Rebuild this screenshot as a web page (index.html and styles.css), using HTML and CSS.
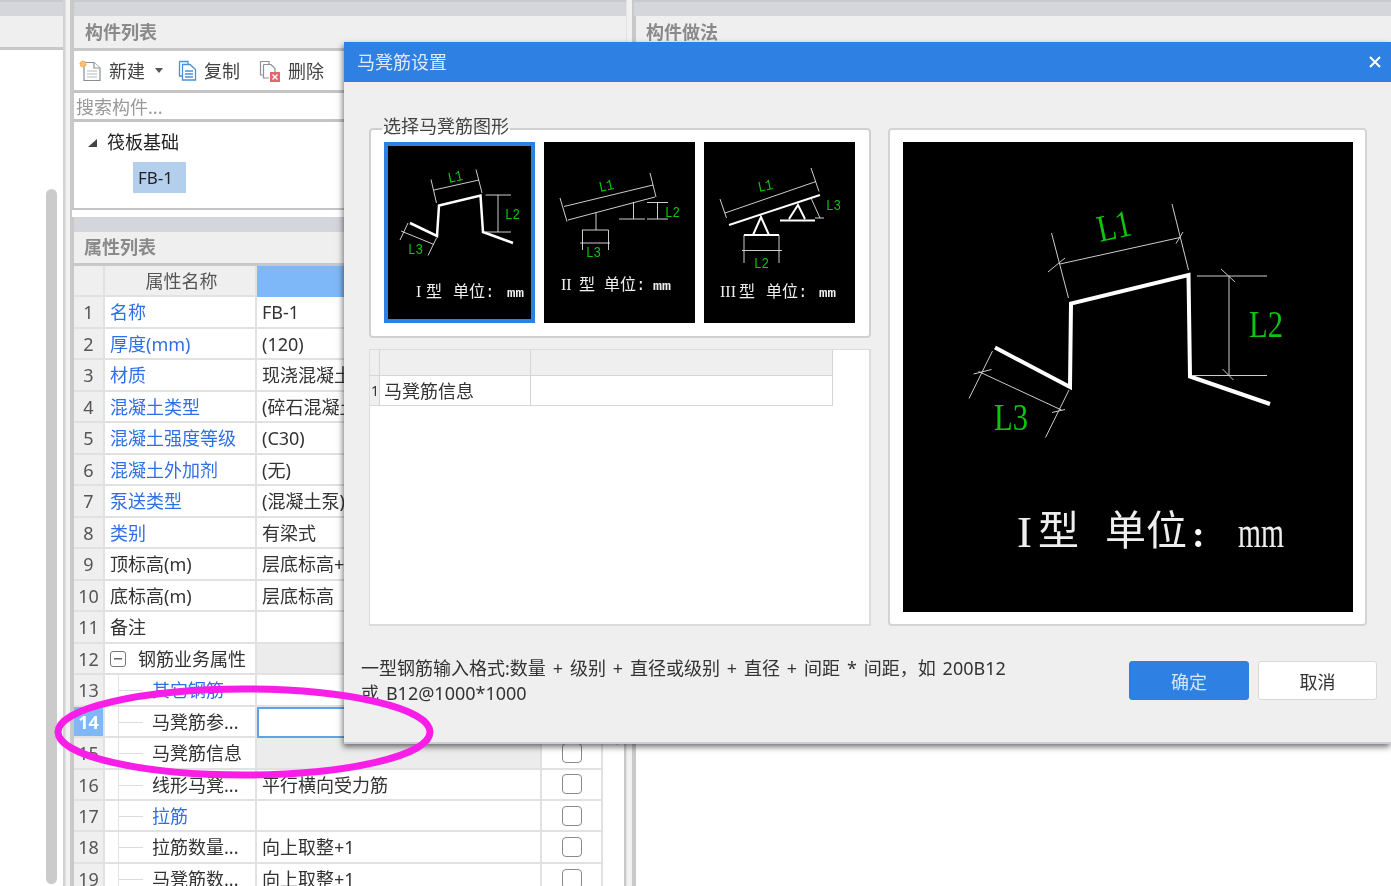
FILE: index.html
```html
<!DOCTYPE html>
<html lang="zh-CN">
<head>
<meta charset="utf-8">
<title>马凳筋设置</title>
<link rel="stylesheet" href="styles.css">
</head>
<body>
<div class="app">
  <section class="pane pane-left">
    <div class="strip"></div>
    <div class="pane-head pane-head-l"></div>
    <div class="left-body"><div class="scroll-thumb"></div></div>
  </section>
  <div class="gutter"></div>
  <section class="pane pane-mid">
    <div class="strip"></div>
    <div class="pane-head"><span class="pane-title">构件列表</span></div>
    <div class="toolbar">
      <span class="tool tool-new">
        <svg class="ico" width="23" height="22" viewBox="0 0 23 22"><path class="ico-page" d="M5 2.500H15L21 8V20.500H5Z"/><path class="ico-page" d="M15 2.500V8H21"/><path class="ico-line" d="M8 11H18M8 14H18M8 17H18"/><circle class="ico-star" cx="4" cy="4" r="3"/></svg>
        新建<i class="caret"></i>
      </span>
      <span class="tool tool-copy">
        <svg class="ico" width="19" height="21" viewBox="0 0 19 21"><path class="ico-blue" d="M1.500 1.500H10V4M1.500 1.500V16H4"/><path class="ico-blue" d="M4.500 4.500H12L17.500 9.500V20H4.500Z"/><path class="ico-blue" d="M7 11H15M7 14H15M7 17H15"/></svg>
        复制
      </span>
      <span class="tool tool-del">
        <svg class="ico" width="22" height="22" viewBox="0 0 22 22"><path class="ico-gray" d="M1.500 1.500H10V4M1.500 1.500V15H4"/><path class="ico-gray" d="M4.500 4.500H12L16 8.500V12M4.500 4.500V18H10"/><rect class="ico-red" x="11" y="12" width="10" height="10"/><path class="ico-x" d="M13.500 14.500L18.500 19.500M18.500 14.500L13.500 19.500"/></svg>
        删除
      </span>
    </div>
    <div class="search">搜索构件...</div>
    <div class="tree-box">
      <div class="tree-root"><i class="tri"></i>筏板基础</div>
      <div class="tree-leaf">FB-1</div>
    </div>
    <div class="strip strip-gap"></div>
    <div class="pane-head pane-head-2"><span class="pane-title">属性列表</span></div>
    <div class="prop-wrap">
      <div class="props">
        <div class="row row-head"><div class="c c-i"></div><div class="c c-n head-n">属性名称</div><div class="c c-v head-sel"></div><div class="c c-k head-sel"></div></div>
        <div class="row"><div class="c c-i">1</div><div class="c c-n blue">名称</div><div class="c c-v">FB-1</div><div class="c c-k"><i class="box"></i></div></div>
        <div class="row"><div class="c c-i">2</div><div class="c c-n blue">厚度(mm)</div><div class="c c-v">(120)</div><div class="c c-k"><i class="box"></i></div></div>
        <div class="row"><div class="c c-i">3</div><div class="c c-n blue">材质</div><div class="c c-v">现浇混凝土</div><div class="c c-k"><i class="box"></i></div></div>
        <div class="row"><div class="c c-i">4</div><div class="c c-n blue">混凝土类型</div><div class="c c-v">(碎石混凝土)</div><div class="c c-k"><i class="box"></i></div></div>
        <div class="row"><div class="c c-i">5</div><div class="c c-n blue">混凝土强度等级</div><div class="c c-v">(C30)</div><div class="c c-k"><i class="box"></i></div></div>
        <div class="row"><div class="c c-i">6</div><div class="c c-n blue">混凝土外加剂</div><div class="c c-v">(无)</div><div class="c c-k"><i class="box"></i></div></div>
        <div class="row"><div class="c c-i">7</div><div class="c c-n blue">泵送类型</div><div class="c c-v">(混凝土泵)</div><div class="c c-k"><i class="box"></i></div></div>
        <div class="row"><div class="c c-i">8</div><div class="c c-n blue">类别</div><div class="c c-v">有梁式</div><div class="c c-k"><i class="box"></i></div></div>
        <div class="row"><div class="c c-i">9</div><div class="c c-n">顶标高(m)</div><div class="c c-v">层底标高+0.12</div><div class="c c-k"><i class="box"></i></div></div>
        <div class="row"><div class="c c-i">10</div><div class="c c-n">底标高(m)</div><div class="c c-v">层底标高</div><div class="c c-k"><i class="box"></i></div></div>
        <div class="row"><div class="c c-i">11</div><div class="c c-n">备注</div><div class="c c-v"></div><div class="c c-k"><i class="box"></i></div></div>
        <div class="row"><div class="c c-i">12</div><div class="c c-n group"><i class="minus"></i>钢筋业务属性</div><div class="c c-v shade"></div><div class="c c-k shade"></div></div>
        <div class="row"><div class="c c-i">13</div><div class="c c-n sub blue">其它钢筋</div><div class="c c-v"></div><div class="c c-k"><i class="box"></i></div></div>
        <div class="row"><div class="c c-i sel">14</div><div class="c c-n sub">马凳筋参...</div><div class="c c-v edit"></div><div class="c c-k"><i class="box"></i></div></div>
        <div class="row"><div class="c c-i">15</div><div class="c c-n sub">马凳筋信息</div><div class="c c-v shade"></div><div class="c c-k"><i class="box"></i></div></div>
        <div class="row"><div class="c c-i">16</div><div class="c c-n sub">线形马凳...</div><div class="c c-v">平行横向受力筋</div><div class="c c-k"><i class="box"></i></div></div>
        <div class="row"><div class="c c-i">17</div><div class="c c-n sub blue">拉筋</div><div class="c c-v"></div><div class="c c-k"><i class="box"></i></div></div>
        <div class="row"><div class="c c-i">18</div><div class="c c-n sub">拉筋数量...</div><div class="c c-v">向上取整+1</div><div class="c c-k"><i class="box"></i></div></div>
        <div class="row"><div class="c c-i">19</div><div class="c c-n sub">马凳筋数...</div><div class="c c-v">向上取整+1</div><div class="c c-k"><i class="box"></i></div></div>
      </div>
      <div class="prop-side"><i class="side-arrow"></i></div>
    </div>
  </section>
  <div class="gutter gutter-2"></div>
  <section class="pane pane-right">
    <div class="strip"></div>
    <div class="pane-head"><span class="pane-title">构件做法</span></div>
    <div class="right-body"></div>
  </section>

  <div class="dialog">
    <div class="dlg-title">
      <span>马凳筋设置</span>
      <svg class="dlg-close" width="12" height="12" viewBox="0 0 12 12"><path d="M1 1L11 11M11 1L1 11"/></svg>
    </div>
    <div class="dlg-main">
      <div class="dlg-left">
        <div class="group-box">
          <span class="group-title">选择马凳筋图形</span>
          <div class="thumbs">
            <svg class="thumb thumb-on" width="151" height="181" viewBox="0 0 151 181">
              <path class="t-thick" d="M26 81L53 94L55 63.500L96.500 53.500L99 90L129 101"/>
              <path class="t-thin" d="M50 48L95 38M47 37.500L52.500 61M92 27.500L98 51M101.500 53H127M101.500 90H127M114 53V90M17 89L50 102.500M24 81L16 98M52.500 96L44 113.500"/>
              <text class="t-lab" x="65" y="41" textLength="15" lengthAdjust="spacingAndGlyphs" transform="rotate(-12 65 41)">L1</text>
              <text class="t-lab" x="121" y="77" textLength="15" lengthAdjust="spacingAndGlyphs">L2</text>
              <text class="t-lab" x="24" y="112" textLength="15" lengthAdjust="spacingAndGlyphs">L3</text>
              <text class="t-cap t-ser" x="32" y="155">I</text>
              <text class="t-cap" x="42" y="155">型</text>
              <text class="t-cap" x="69" y="155">单位:</text>
              <text class="t-mm" x="123" y="155" textLength="17" lengthAdjust="spacingAndGlyphs">mm</text>
            </svg>
            <svg class="thumb" width="151" height="181" viewBox="0 0 151 181">
              <path class="t-thin" d="M20 64.500L109 43M24 78L111 55M16 56L23 79.500M106 31L112 55M89.500 60V77M75 77H101M103 60.500H124M103 77H124M113.500 60.500V77M52 71V88M38 88H64.500M38.500 88V108M64.500 88V108M36 101H66"/>
              <text class="t-lab" x="56" y="50" textLength="15" lengthAdjust="spacingAndGlyphs" transform="rotate(-12 56 50)">L1</text>
              <text class="t-lab" x="121" y="75" textLength="15" lengthAdjust="spacingAndGlyphs">L2</text>
              <text class="t-lab" x="42" y="115" textLength="15" lengthAdjust="spacingAndGlyphs">L3</text>
              <text class="t-cap t-ser" x="17" y="148">II</text>
              <text class="t-cap" x="35" y="148">型</text>
              <text class="t-cap" x="60" y="148">单位:</text>
              <text class="t-mm" x="109" y="148" textLength="18" lengthAdjust="spacingAndGlyphs">mm</text>
            </svg>
            <svg class="thumb" width="151" height="181" viewBox="0 0 151 181">
              <path class="t-thick-3" d="M25 83L116 53M49 93L57 75L65 93M40 93H75M85 77L94 63L101 77M76 78.500H111"/>
              <path class="t-thin" d="M21 71L112 39.500M16 57L22.500 76M107 26L115 49.500M107 56L116 76M111 76H120M40 93V121M75 93V121M38 108.500H78"/>
              <text class="t-lab" x="55" y="50" textLength="15" lengthAdjust="spacingAndGlyphs" transform="rotate(-12 55 50)">L1</text>
              <text class="t-lab" x="122" y="68" textLength="15" lengthAdjust="spacingAndGlyphs">L3</text>
              <text class="t-lab" x="50" y="126" textLength="15" lengthAdjust="spacingAndGlyphs">L2</text>
              <text class="t-cap t-ser" x="16" y="155">III</text>
              <text class="t-cap" x="35" y="155">型</text>
              <text class="t-cap" x="62" y="155">单位:</text>
              <text class="t-mm" x="115" y="155" textLength="17" lengthAdjust="spacingAndGlyphs">mm</text>
            </svg>
          </div>
        </div>
        <div class="mini-table">
          <div class="mini-row mini-head"><div class="m-i"></div><div class="m-n"></div><div class="m-v"></div></div>
          <div class="mini-row"><div class="m-i m-idx">1</div><div class="m-n">马凳筋信息</div><div class="m-v"></div></div>
        </div>
      </div>
      <div class="preview">
        <svg class="preview-svg" width="450" height="470" viewBox="0 0 450 470">
          <path class="p-thick" d="M92 205.500L167 245L168 161.500L285.500 133L287 234.500L367 262"/>
          <path class="p-thin" d="M157 122L277 95.500M148.500 91L165.500 156M269 62L285.500 128M145 130L162 116M273 101.500L280 90M294 134H364M289 233.500H364M326 134V233.500M318 127L332 140M319.500 227L330.500 238M75.500 229.500L158.500 268M89.500 209L66 256.500M166 248L142.500 295.500M70.500 232L88.500 227.500M149 270.500L162 267.500"/>
          <text class="p-lab" x="197" y="100" textLength="34" lengthAdjust="spacingAndGlyphs" transform="rotate(-12 197 100)">L1</text>
          <text class="p-lab" x="346" y="195" textLength="34" lengthAdjust="spacingAndGlyphs">L2</text>
          <text class="p-lab" x="91" y="288" textLength="34" lengthAdjust="spacingAndGlyphs">L3</text>
          <text class="p-ser" x="114" y="405">I</text>
          <text class="p-cn" x="135" y="403">型</text>
          <text class="p-cn" x="202" y="403">单位</text>
          <text class="p-colon" x="289" y="405">:</text>
          <text class="p-mm" x="335" y="405" textLength="46" lengthAdjust="spacingAndGlyphs">mm</text>
        </svg>
      </div>
    </div>
    <div class="dlg-foot">
      <p class="hint">一型钢筋输入格式:数量 + 级别 + 直径或级别 + 直径 + 间距 * 间距，如 200B12<br>或 B12@1000*1000</p>
      <div class="btns"><span class="btn btn-ok">确定</span><span class="btn">取消</span></div>
    </div>
  </div>

  <svg class="mark" width="400" height="110" viewBox="0 0 400 110"><ellipse cx="192" cy="55" rx="186" ry="43"/></svg>
</div>
</body>
</html>
```

FILE: styles.css
```css
* { box-sizing: border-box; }
html, body { margin: 0; height: 100%; overflow: hidden; background: #fff; }
body { font: 18px/24px "Noto Sans", "Noto Sans CJK SC", sans-serif; color: #333; }
.app { position: relative; display: flex; width: 1391px; height: 886px; overflow: hidden; background: #f0f0f0; filter: blur(0.4px); }

.pane { display: flex; flex-direction: column; height: 886px; background: #fff; overflow: hidden; }
.pane-left { width: 65px; border-right: 2px solid #d2d2d2; }
.pane-mid { width: 554px; }
.pane-right { flex: 1; }
.gutter { width: 7px; background: #f1f1f1; border-right: 2px solid #c9c9c9; border-left: 1px solid #e2e2e2; }
.gutter-2 { width: 8px; }

.strip { flex: none; height: 16px; background: #d5d6db; border-top: 2px solid #c9cacd; }
.strip-gap { border-top: 0; height: 15px; margin-top: 7px; }
.pane-head { flex: none; height: 35px; padding: 4px 0 0 11px; background: #efefef; border-bottom: 3px solid #c8c8c8; }
.pane-head-l { height: 34px; }
.pane-head-2 { height: 34px; padding-left: 10px; padding-top: 3px; }
.pane-title { color: #8a8a8a; font-weight: 700; font-size: 18px; }
.pane-mid > * { border-left: 2px solid #c8c8c8; }

.left-body { flex: 1; display: flex; justify-content: flex-end; padding: 139px 6px 2px 0; background: #fff; }
.scroll-thumb { width: 11px; background: #cbcbcb; border-radius: 6px; }
.right-body { flex: 1; background: #fff; border-left: 2px solid #c8c8c8; }
.pane-right .pane-head { padding-left: 10px; border-left: 2px solid #c8c8c8; }

.toolbar { flex: none; display: flex; align-items: center; height: 42px; padding-left: 5px; background: #fff; color: #444; border-bottom: 3px solid #c4c4c4; }
.tool { display: flex; align-items: center; }
.tool-new { width: 99px; }
.tool-copy { width: 81px; }
.ico { margin-right: 7px; flex: none; }
.caret { width: 0; height: 0; margin-left: 10px; border: 4px solid transparent; border-top: 5px solid #555; border-bottom: 0; }
.ico-page { fill: #fff; stroke: #8a9298; stroke-width: 1.2; }
.ico-line { fill: none; stroke: #b5b9bd; stroke-width: 1; }
.ico-star { fill: #f9c27a; stroke: #f39a35; stroke-width: 1; stroke-dasharray: 2 1; }
.ico-blue { fill: #fff; stroke: #4a90d9; stroke-width: 1.3; }
.ico-gray { fill: #fff; stroke: #8b9196; stroke-width: 1.2; }
.ico-red { fill: #e0696b; }
.ico-x { fill: none; stroke: #fff; stroke-width: 1.3; }

.search { flex: none; height: 29px; padding-left: 2px; color: #999; background: #fff; border-bottom: 3px solid #c4c4c4; line-height: 28px; }
.tree-box { flex: none; height: 88px; padding: 8px 0 0 33px; background: #fff; border-bottom: 2px solid #c4c4c4; color: #222; }
.tree-root { position: relative; height: 24px; }
.tri { position: absolute; left: -19px; top: 9px; width: 0; height: 0; border-left: 9px solid transparent; border-bottom: 8px solid #444; }
.tree-leaf { width: 53px; height: 31px; margin: 8px 0 0 26px; padding-left: 5px; background: #b4cfee; line-height: 31px; font-size: 17px; }

.prop-wrap { flex: 1; display: flex; min-height: 0; background: #fff; }
.props { flex: none; width: 529px; }
.row { display: grid; grid-template-columns: 31px 152px 285px 61px; height: 31.47px; }
.c { min-width: 0; overflow: hidden; white-space: nowrap; border-right: 2px solid #e1e1e1; border-bottom: 2px solid #e1e1e1; line-height: 30px; color: #333; }
.row-head .c { background: #efefef; }
.head-n { text-align: center; color: #555; padding-right: 2px; }
.row-head .head-sel { background: #7eb8f8; border-color: #7eb8f8; }
.c-i { background: #efefef; text-align: center; color: #555; }
.c-n { padding-left: 5px; }
.c-v { padding-left: 5px; }
.c-k { display: flex; align-items: center; justify-content: center; }
.blue { color: #2f6fe6; }
.shade { background: #ececec; }
.group { padding-left: 33px; position: relative; }
.minus { position: absolute; left: 5px; top: 7px; width: 16px; height: 16px; border: 1.500px solid #777; border-radius: 3px; background: linear-gradient(#666, #666) center / 8px 1.500px no-repeat; }
.sub { position: relative; padding-left: 47px; }
.sub::before { content: ""; position: absolute; left: 13px; top: -2px; bottom: -2px; width: 1px; background: #e4e4e4; }
.sub::after { content: ""; position: absolute; left: 14px; top: 15px; width: 24px; height: 1px; background: #dcdcdc; }
.sel { background: #7eb8f8; color: #fff; font-weight: 700; }
.edit { border: 2px solid #5ba3ee; background: #fff; }
.box { width: 20px; height: 20px; border: 1.500px solid #8a8a8a; border-radius: 4px; background: #fff; }
.prop-side { flex: 1; padding: 473px 0 0 9px; border-right: 2px solid #c8c8c8; }
.side-arrow { display: block; width: 0; height: 0; border: 5px solid transparent; border-top: 6px solid #999; border-bottom: 0; }

.dialog { position: absolute; left: 344px; top: 42px; width: 1047px; height: 702px; display: flex; flex-direction: column; background: #efefef; border-bottom: 2px solid #c9cdd6; box-shadow: -1px 3px 6px rgba(0, 0, 0, 0.55); }
.dlg-title { flex: none; display: flex; align-items: center; justify-content: space-between; height: 40px; padding: 0 10px 0 13px; background: #2e80e2; color: #dfeaf8; }
.dlg-close path { fill: none; stroke: #fff; stroke-width: 2; }
.dlg-main { flex: none; display: flex; gap: 17px; height: 498px; margin-top: 46px; padding-left: 25px; }
.dlg-left { width: 502px; display: flex; flex-direction: column; gap: 11px; }
.group-box { position: relative; flex: none; height: 210px; padding: 12px 0 0 13px; background: #fff; border: 2px solid #d0d0d0; border-radius: 4px; }
.group-title { position: absolute; left: 11px; top: -15px; padding: 0 1px; background: linear-gradient(#efefef 62%, #fff 62%); color: #444; line-height: 22px; }
.thumbs { display: flex; gap: 9px; }
.thumb { display: block; background: #000; }
.thumb-on { outline: 4px solid #2e80e2; outline-offset: -4px; }
.t-thick { fill: none; stroke: #fff; stroke-width: 2.500; }
.t-thick-3 { fill: none; stroke: #fff; stroke-width: 2; }
.t-thin { fill: none; stroke: #e4e4e4; stroke-width: 0.900; }
.t-lab { fill: #0ec40e; font: 15px "Liberation Mono", monospace; }
.t-cap { fill: #eee; font: 16px "Liberation Mono", "Noto Sans CJK SC", monospace; }
.t-ser { font-family: "Liberation Serif", serif; }
.t-mm { fill: #eee; font: 700 12px "Liberation Mono", monospace; }

.mini-table { flex: 1; background: #fff; border: 1px solid #dcdcdc; border-right-width: 2px; border-bottom-width: 2px; padding-right: 35px; }
.mini-row { display: grid; grid-template-columns: 10px 151px 302px; height: 30px; }
.mini-head { height: 26px; }
.mini-head > div { background: #efefef; }
.mini-row > div { border-right: 1px solid #d5d5d5; border-bottom: 1px solid #d5d5d5; line-height: 30px; overflow: hidden; }
.m-n { padding-left: 4px; }
.m-idx { font-size: 14px; background: #efefef; padding-left: 1px; }

.preview { flex: none; width: 479px; padding: 12px 0 0 13px; background: #fff; border: 2px solid #d4d4d4; border-radius: 4px; }
.preview-svg { display: block; background: #000; }
.p-thick { fill: none; stroke: #fff; stroke-width: 4; }
.p-thin { fill: none; stroke: #ccc; stroke-width: 1; }
.p-lab { fill: #0ec40e; font: 38px "Liberation Serif", serif; }
.p-ser { fill: #eee; font: 45px "Liberation Serif", serif; }
.p-cn { fill: #eee; font: 41px "Noto Sans CJK SC", serif; }
.p-colon { fill: #fff; font: 700 38px "Liberation Serif", serif; }
.p-mm { fill: #eee; font: 44px "Liberation Serif", serif; }

.dlg-foot { flex: none; display: flex; justify-content: space-between; padding: 30px 14px 0 17px; }
.hint { margin: 0; line-height: 25px; color: #333; word-spacing: 2.200px; }
.btns { display: flex; gap: 9px; margin-top: 5px; }
.btn { width: 119px; height: 39px; text-align: center; line-height: 40px; background: #fff; border: 1px solid #d8d8d8; border-radius: 3px; color: #333; }
.btn-ok { width: 120px; background: #2e80e2; border-color: #2e80e2; color: #d5e6fb; }

.mark { position: absolute; left: 52px; top: 677px; }
.mark ellipse { fill: none; stroke: #f81ee8; stroke-width: 7; }
```
